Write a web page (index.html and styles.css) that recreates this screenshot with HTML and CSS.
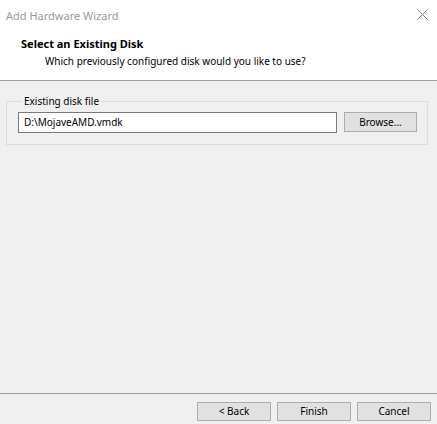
FILE: index.html
```html
<!DOCTYPE html>
<html>
<head>
<meta charset="utf-8">
<link rel="stylesheet" href="styles.css">
</head>
<body>
<div class="window">
  <div class="titlebar">
    <span class="title">Add Hardware Wizard</span>
    <svg class="close" width="11" height="11" viewBox="0 0 11 11"><path d="M0.5 0.5 L10.5 10.5 M10.5 0.5 L0.5 10.5" stroke="#808080" stroke-width="1" fill="none"/></svg>
  </div>
  <div class="header">
    <div class="heading">Select an Existing Disk</div>
    <div class="subheading">Which previously configured disk would you like to use?</div>
  </div>
  <div class="content">
    <fieldset class="group">
      <legend class="group-label">Existing disk file</legend>
      <div class="file-row">
        <div class="textbox">D:\MojaveAMD.vmdk</div>
        <button class="btn browse">Browse...</button>
      </div>
    </fieldset>
  </div>
  <div class="footer">
    <button class="btn">&lt; Back</button>
    <button class="btn">Finish</button>
    <button class="btn">Cancel</button>
  </div>
</div>
</body>
</html>
```
FILE: styles.css
```css
html, body {
  margin: 0;
  padding: 0;
}
body {
  font-family: "Noto Sans", "DejaVu Sans", sans-serif;
  font-size: 10px;
  color: #000;
}
.window {
  width: 437px;
  height: 424px;
  display: flex;
  flex-direction: column;
  background: #f0f0f0;
  overflow: hidden;
}
.titlebar {
  height: 30px;
  flex: none;
  background: #fff;
  display: flex;
  align-items: center;
  justify-content: space-between;
  padding: 0 9px 0 6px;
}
.title {
  color: #9a9a9a;
  font-size: 11px;
}
.close {
  display: block;
  margin-top: -2px;
}
.header {
  flex: none;
  background: #fff;
  border-bottom: 1px solid #a0a0a0;
  padding: 6px 0 0 21px;
  box-sizing: border-box;
  height: 51px;
}
.heading {
  font-weight: bold;
  font-size: 11px;
  line-height: 16px;
}
.subheading {
  padding-left: 24px;
  line-height: 16px;
  margin-top: 1px;
}
.content {
  flex: 1;
  padding: 13px 9px 0 6px;
}
.group {
  margin: 0;
  border: 1px solid #dcdcdc;
  padding: 4px 10px 11px 11px;
}
.group-label {
  padding: 0 2px;
  margin-left: 4px;
  line-height: 14px;
}
.file-row {
  display: flex;
  align-items: flex-start;
  gap: 7px;
}
.textbox {
  width: 319px;
  height: 21px;
  box-sizing: border-box;
  border: 1px solid #7a7a7a;
  background: #fff;
  padding: 0 5px;
  line-height: 19px;
}
.btn {
  font-family: "Noto Sans", "DejaVu Sans", sans-serif;
  font-size: 10px;
  color: #000;
  background: #e1e1e1;
  border: 1px solid #adadad;
  height: 19px;
  width: 74px;
  padding: 0;
  margin: 0;
  line-height: 17px;
}
.browse {
  width: 73px;
  height: 20px;
}
.footer {
  flex: none;
  border-top: 1px solid #a0a0a0;
  padding: 8px 6px 3px 197px;
  display: flex;
  gap: 6px;
}
```
